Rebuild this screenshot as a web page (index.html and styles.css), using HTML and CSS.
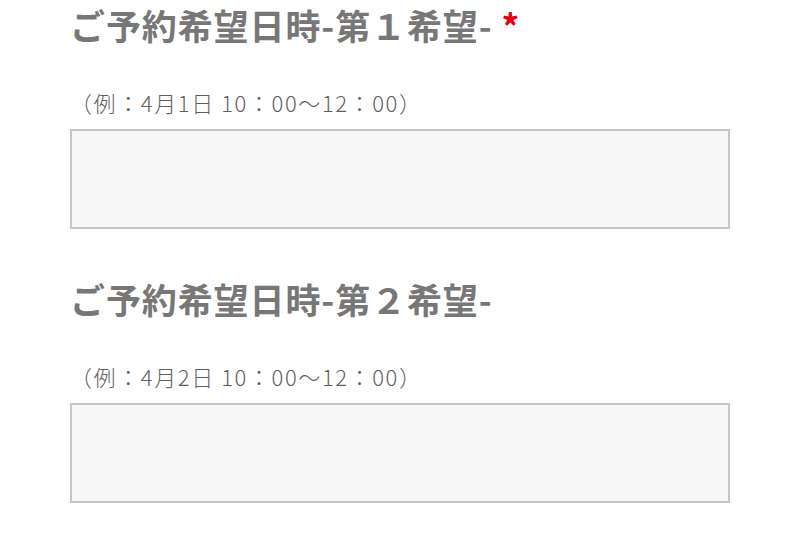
FILE: index.html
```html
<!DOCTYPE html>
<html lang="ja">
<head>
<meta charset="utf-8">
<title>ご予約希望日時</title>
<link rel="stylesheet" href="styles.css">
</head>
<body>
<form class="form">
  <div class="field">
    <h2 class="label">ご予約希望日時-第１希望- <span class="req">*</span></h2>
    <p class="hint">（例：4月1日 10：00〜12：00）</p>
    <textarea class="box"></textarea>
  </div>
  <div class="field">
    <h2 class="label">ご予約希望日時-第２希望-</h2>
    <p class="hint">（例：4月2日 10：00〜12：00）</p>
    <textarea class="box"></textarea>
  </div>
</form>
</body>
</html>
```
FILE: styles.css
```css
html, body {
  margin: 0;
  padding: 0;
  background: #ffffff;
}
body {
  font-family: "Noto Sans CJK JP", "Noto Sans", sans-serif;
}
.form {
  display: flex;
  flex-direction: column;
  gap: 45px;
  padding-left: 70px;
  width: 660px;
}
.field {
  display: flex;
  flex-direction: column;
}
.label {
  margin: 0 0 36px 0;
  font-size: 35px;
  line-height: 50px;
  font-weight: 700;
  letter-spacing: 0.9px;
  color: #777777;
  white-space: nowrap;
}
.req {
  color: #e60012;
}
.hint {
  margin: 0 0 11px 0;
  font-size: 22px;
  line-height: 32px;
  font-weight: 300;
  letter-spacing: 1.6px;
  color: #5f5f5f;
  white-space: nowrap;
}
.box {
  box-sizing: border-box;
  display: block;
  width: 660px;
  height: 100px;
  margin: 0;
  padding: 8px;
  border: 2px solid #c6c6c6;
  border-radius: 0;
  background: #f7f7f7;
  resize: none;
  outline: none;
  font-family: inherit;
  font-size: 16px;
}
```
